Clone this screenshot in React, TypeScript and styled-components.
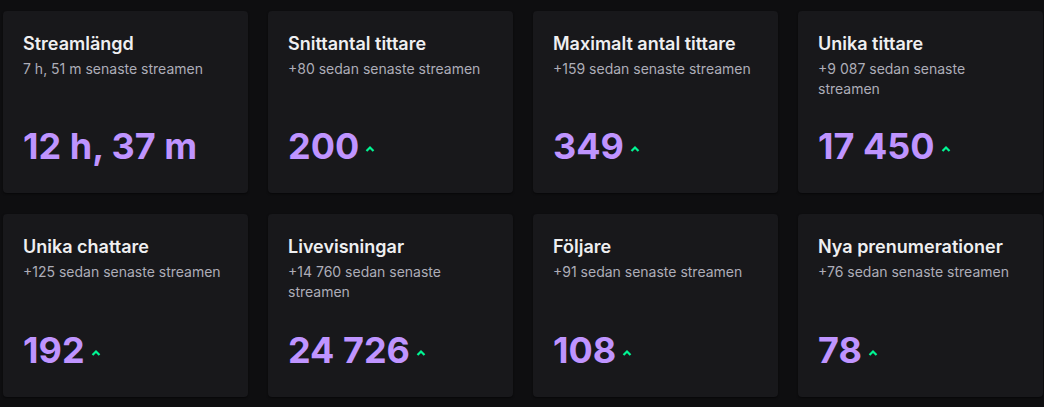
import React from "react";
import styled, { createGlobalStyle } from "styled-components";

const Global = createGlobalStyle`
  html, body { margin: 0; padding: 0; background: #0e0e10; }
  body { font-family: Inter, "Noto Sans", sans-serif; -webkit-font-smoothing: antialiased; }
`;

const Grid = styled.div`
  display: grid;
  grid-template-columns: repeat(4, 245px);
  grid-template-rows: 182px 183px;
  column-gap: 20px;
  row-gap: 21px;
  padding: 11px 1px 10px 3px;
`;

const Card = styled.div`
  background: #18181b;
  border-radius: 4px;
  box-shadow: 0 1px 2px rgba(0, 0, 0, 0.5);
  padding: 21px 20px 25px 20px;
  display: flex;
  flex-direction: column;
  box-sizing: border-box;
`;

const Title = styled.div`
  color: #efeff1;
  font-size: 18px;
  font-weight: 600;
  line-height: 24px;
`;

const Sub = styled.div`
  color: #adadb8;
  font-size: 14px;
  line-height: 20px;
  margin-top: 3px;
`;

const ValueRow = styled.div`
  margin-top: auto;
  display: flex;
  align-items: center;
`;

const Value = styled.span`
  color: #bf94ff;
  font-size: 36px;
  font-weight: 700;
  line-height: 44px;
`;

const Caret = styled.svg`
  margin-left: 6px;
  margin-top: 6px;
`;

type Item = { title: string; sub: string; value: string; up?: boolean };

const items: Item[] = [
  { title: "Streamlängd", sub: "7 h, 51 m senaste streamen", value: "12 h, 37 m" },
  { title: "Snittantal tittare", sub: "+80 sedan senaste streamen", value: "200", up: true },
  { title: "Maximalt antal tittare", sub: "+159 sedan senaste streamen", value: "349", up: true },
  { title: "Unika tittare", sub: "+9 087 sedan senaste streamen", value: "17 450", up: true },
  { title: "Unika chattare", sub: "+125 sedan senaste streamen", value: "192", up: true },
  { title: "Livevisningar", sub: "+14 760 sedan senaste streamen", value: "24 726", up: true },
  { title: "Följare", sub: "+91 sedan senaste streamen", value: "108", up: true },
  { title: "Nya prenumerationer", sub: "+76 sedan senaste streamen", value: "78", up: true },
];

const Up = () => (
  <Caret width="10" height="8" viewBox="0 0 10 8">
    <path d="M1.5 6 L5 2.5 L8.5 6" fill="none" stroke="#00f593" strokeWidth="2.2" strokeLinecap="butt" strokeLinejoin="miter" />
  </Caret>
);

export default function App() {
  return (
    <>
      <Global />
      <Grid>
        {items.map((it) => (
          <Card key={it.title}>
            <Title>{it.title}</Title>
            <Sub>{it.sub}</Sub>
            <ValueRow>
              <Value>{it.value}</Value>
              {it.up && <Up />}
            </ValueRow>
          </Card>
        ))}
      </Grid>
    </>
  );
}
